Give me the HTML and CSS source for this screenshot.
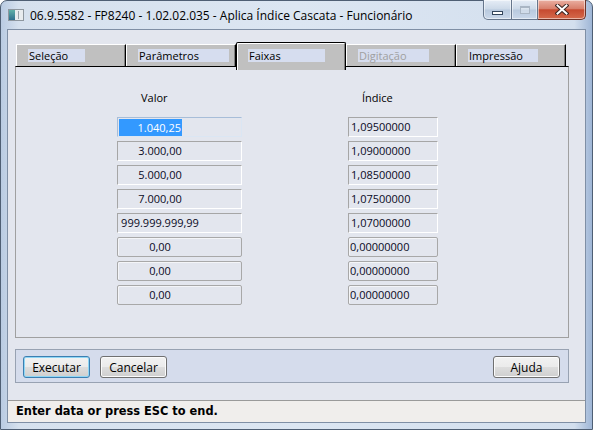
FILE: index.html
```html
<!DOCTYPE html>
<html lang="pt">
<head>
  <meta charset="UTF-8">
  <title>Aplica Índice Cascata</title>
  <link rel="stylesheet" href="styles.css">
</head>
<body>

<div class="window">
  <div class="titlebar">
    <svg class="app-icon" width="16" height="12" viewBox="0 0 16 12">
      <defs>
        <linearGradient id="ic" x1="0" y1="0" x2="0" y2="1">
          <stop offset="0" stop-color="#5fb0a8"/>
          <stop offset="1" stop-color="#2f6f8f"/>
        </linearGradient>
      </defs>
      <rect x="0.5" y="0.5" width="15" height="11" fill="#e8ecef" stroke="#8e979f"/>
      <rect x="1" y="1" width="6" height="10" fill="url(#ic)"/>
      <rect x="10" y="2" width="1" height="8" fill="#9aa3aa"/>
    </svg>
    <span class="title">06.9.5582 - FP8240 - 1.02.02.035 - Aplica Índice Cascata - Funcionário</span>
    <div class="caps">
      <span class="cap min"><i></i></span>
      <span class="cap max"><i></i></span>
      <span class="cap close">
        <svg width="14" height="11" viewBox="0 0 14 11">
          <path d="M2.5 1.5 L11.5 9.5 M11.5 1.5 L2.5 9.5" stroke="#3b2622" stroke-width="4" stroke-linecap="square"/>
          <path d="M2.5 1.5 L11.5 9.5 M11.5 1.5 L2.5 9.5" stroke="#fff" stroke-width="2" stroke-linecap="square"/>
        </svg>
      </span>
    </div>
  </div>

  <div class="frame">
    <div class="client">
      <div class="tabs">
        <div class="tab"><span class="w57">Seleção</span></div>
        <div class="tab"><span class="w91">Parâmetros</span></div>
        <div class="tab active"><span class="w77">Faixas</span></div>
        <div class="tab disabled"><span class="w71">Digitação</span></div>
        <div class="tab"><span class="w70">Impressão</span></div>
      </div>

      <div class="page">
        <div class="grid">
          <div class="head valor">Valor</div>
          <div class="head indice">Índice</div>

          <div class="fld focus"><span class="amt sel">1.040,25</span></div>
          <div class="fld idx">1,09500000</div>

          <div class="fld"><span class="amt">3.000,00</span></div>
          <div class="fld idx">1,09000000</div>

          <div class="fld"><span class="amt">5.000,00</span></div>
          <div class="fld idx">1,08500000</div>

          <div class="fld"><span class="amt">7.000,00</span></div>
          <div class="fld idx">1,07500000</div>

          <div class="fld"><span class="amt">999.999.999,99</span></div>
          <div class="fld idx">1,07000000</div>

          <div class="fld off"><span class="amt">0,00</span></div>
          <div class="fld idx off">0,00000000</div>

          <div class="fld off"><span class="amt">0,00</span></div>
          <div class="fld idx off">0,00000000</div>

          <div class="fld off"><span class="amt">0,00</span></div>
          <div class="fld idx off">0,00000000</div>
        </div>
      </div>

      <div class="buttonbar">
        <button class="btn default">Executar</button>
        <button class="btn">Cancelar</button>
        <button class="btn right">Ajuda</button>
      </div>
    </div>

    <div class="status">Enter data or press ESC to end.</div>
  </div>
</div>

</body>
</html>
```

FILE: styles.css
```css
body { margin: 0; background: #fff; font-family: "Open Sans", "Noto Sans", sans-serif; font-size: 11px; color: #000; }

/* window chrome */
.window {
  width: 593px; height: 430px; box-sizing: border-box;
  border: 1px solid #4f5f74; border-radius: 7px 7px 0 0;
  background: linear-gradient(90deg, #b9cbe2 0%, #d6e1ee 3%, #dce6f2 50%, #d3dfee 97%, #9fb6d6 100%);
  padding: 0 6px 6px 6px; display: flex; flex-direction: column;
}
.titlebar { height: 28px; display: flex; align-items: center; padding-left: 1px; }
.app-icon { flex: none; }
.title { margin-left: 6px; font-size: 12px; color: #000; white-space: nowrap; }
.caps { display: flex; margin-left: auto; align-self: flex-start; margin-top: -1px; }
.cap {
  height: 20px; box-sizing: border-box; border: 1px solid #66768c; border-top: none;
  background: linear-gradient(#e6edf6, #ccd9e8 48%, #b8c9de 52%, #cad8ea);
  display: flex; align-items: center; justify-content: center;
  box-shadow: inset 0 0 0 1px rgba(255,255,255,0.5);
}
.cap.min { width: 29px; border-radius: 0 0 0 5px; }
.cap.min i { width: 9px; height: 2px; background: #fff; border: 1px solid #34465c; margin-top: 6px; }
.cap.max { width: 26px; border-left: none; }
.cap.max i { width: 8px; height: 5px; border: 1px solid #aab6c4; border-top-width: 2px; background: rgba(255,255,255,0.3); }
.cap.close {
  width: 48px; border-left: none; border-color: #6e3328; border-radius: 0 0 5px 0;
  background: linear-gradient(#eab0a2, #d8806c 45%, #c64a30 52%, #d56a4c);
}

.frame { flex: 1; border: 1px solid #7f8fa5; background: #e3e6ee; display: flex; flex-direction: column; }
.client { flex: 1; padding: 12px 0 0 7px; }

/* tabs */
.tabs { display: flex; align-items: flex-end; height: 24px; width: 554px; padding-left: 1px; box-sizing: border-box; }
.tab {
  width: 110px; height: 22px; box-sizing: border-box; flex: none;
  background: #c0c0c0; border-top: 1px solid #fff; border-left: 1px solid #fff; border-right: 1px solid #000;
  box-shadow: inset -1px 0 #808080; padding: 4px 0 0 11px;
}
.tab span { display: block; height: 13px; line-height: 13px; background: #d6ddef; padding-left: 1px; box-sizing: border-box; }
.tab.active {
  height: 28px; margin-bottom: -4px; position: relative; z-index: 1;
  border: 1px solid #000; border-bottom: none; border-radius: 2px 2px 0 0;
  box-shadow: inset 1px 1px #fff, inset -1px 0 #808080; padding-top: 6px;
}
.tab.disabled span { color: #a0a0a0; }
.w57 { width: 57px; }
.w91 { width: 91px; }
.w77 { width: 77px; }
.w71 { width: 71px; }
.w70 { width: 70px; }

.page {
  width: 554px; height: 272px; box-sizing: border-box;
  border: 1px solid #a0a0a0; border-top-color: #000; padding: 24px 0 0 101px;
}
.grid {
  display: grid; grid-template-columns: 125px 90px; grid-template-rows: 22px repeat(8, 20px);
  column-gap: 106px; row-gap: 4px;
}
.head { line-height: 14px; }
.head.valor { padding-left: 24px; }
.head.indice { padding-left: 14px; }

.fld {
  box-sizing: border-box; border: 1px solid; border-color: #a6a6a6 #fff #fff #a6a6a6;
  line-height: 18px; white-space: nowrap; overflow: hidden; color: #0a0a1e;
}
.fld.off { border-color: #a8a8a8; border-radius: 2px; box-shadow: inset 1px 1px rgba(255,255,255,0.6); }
.fld.focus { border-color: #a7bdd8 #dbe6f3 #dbe6f3 #a7bdd8; }
.fld.idx { padding-left: 2px; }
.fld.idx.off { padding-left: 1px; }
.amt { display: inline-block; width: 84px; text-align: center; }
.amt.sel {
  width: 63px; margin: 1px 0 0 1px; line-height: 17px; vertical-align: top;
  text-align: right; padding-right: 1px; box-sizing: border-box; background: #3399ff; color: #fff;
}

/* bottom buttons */
.buttonbar {
  width: 554px; height: 34px; box-sizing: border-box; margin-top: 11px;
  border: 1px solid #98a2b2; background: #d5dcec;
  display: flex; gap: 10px; padding: 6px 8px 0 7px;
}
.btn {
  width: 67px; height: 22px; box-sizing: border-box; padding: 0;
  border: 1px solid #707070; border-radius: 3px;
  background: linear-gradient(#f2f2f2 0%, #ebebeb 50%, #dddddd 51%, #cfcfcf 100%);
  box-shadow: inset 0 0 0 1px #fbfbfb;
  font-family: "Open Sans", "Noto Sans", sans-serif; font-size: 12px; color: #000; line-height: 19px;
}
.btn.default { border-color: #3c7fb1; box-shadow: inset 0 0 0 1px #8fd6f5; }
.btn.right { margin-left: auto; }

.status {
  height: 22px; box-sizing: border-box; border-top: 1px solid #9a9a9a; background: #f0eeec;
  font-family: "DejaVu Sans", sans-serif; font-weight: bold; font-size: 11.4px;
  line-height: 20px; padding-left: 8px;
}
```
